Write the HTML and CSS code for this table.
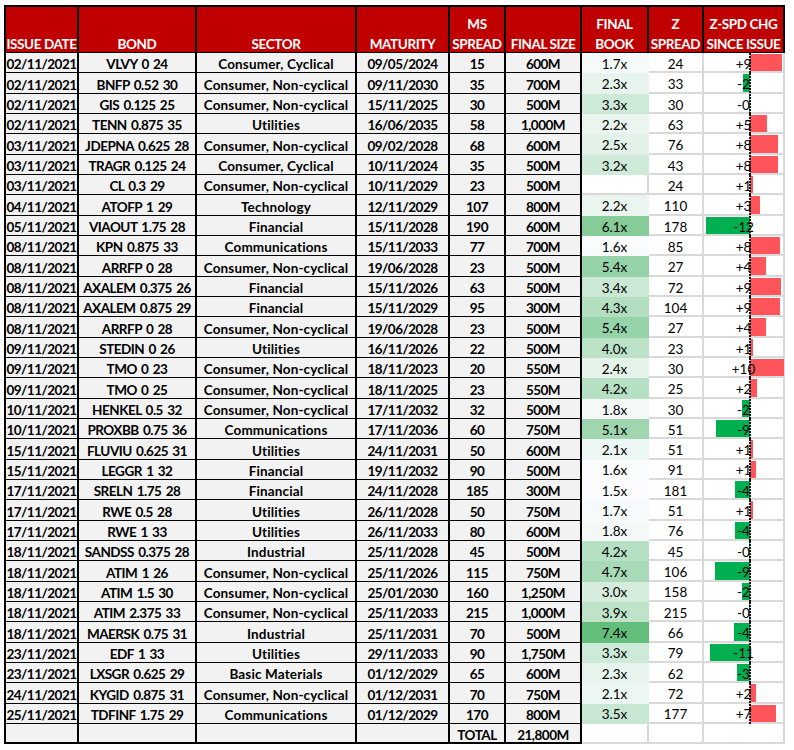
FILE: index.html
```html
<!DOCTYPE html>
<html lang="en">
<head>
<meta charset="utf-8">
<title>New issue performance</title>
<link rel="stylesheet" href="styles.css">
</head>
<body>
<div class="sheet">
  <div class="h first"><span>ISSUE DATE</span></div>
  <div class="h"><span>BOND</span></div>
  <div class="h"><span>SECTOR</span></div>
  <div class="h"><span>MATURITY</span></div>
  <div class="h"><span>MS<br>SPREAD</span></div>
  <div class="h"><span>FINAL SIZE</span></div>
  <div class="h"><span>FINAL<br>BOOK</span></div>
  <div class="h"><span>Z<br>SPREAD</span></div>
  <div class="h"><span>Z-SPD CHG<br>SINCE ISSUE</span></div>

  <div class="c first">02/11/2021</div><div class="c">VLVY 0 24</div><div class="c">Consumer, Cyclical</div><div class="c">09/05/2024</div><div class="c">15</div><div class="c">600M</div><div class="b" style="--fill:#f7fafb">1.7x</div><div class="zs">24</div><div class="z"><i class="bar pos" style="width:32px"></i><span>+9</span></div>
  <div class="c first">02/11/2021</div><div class="c">BNFP 0.52 30</div><div class="c">Consumer, Non-cyclical</div><div class="c">09/11/2030</div><div class="c">35</div><div class="c">700M</div><div class="b" style="--fill:#e7f4ed">2.3x</div><div class="zs">33</div><div class="z"><i class="bar neg" style="width:7px"></i><span>-2</span></div>
  <div class="c first">02/11/2021</div><div class="c">GIS 0.125 25</div><div class="c">Consumer, Non-cyclical</div><div class="c">15/11/2025</div><div class="c">30</div><div class="c">500M</div><div class="b" style="--fill:#cde9d7">3.3x</div><div class="zs">30</div><div class="z"><i class="bar neg" style="width:1px"></i><span>-0</span></div>
  <div class="c first">02/11/2021</div><div class="c">TENN 0.875 35</div><div class="c">Utilities</div><div class="c">16/06/2035</div><div class="c">58</div><div class="c">1,000M</div><div class="b" style="--fill:#eaf5ef">2.2x</div><div class="zs">63</div><div class="z"><i class="bar pos" style="width:17px"></i><span>+5</span></div>
  <div class="c first">03/11/2021</div><div class="c">JDEPNA 0.625 28</div><div class="c">Consumer, Non-cyclical</div><div class="c">09/02/2028</div><div class="c">68</div><div class="c">600M</div><div class="b" style="--fill:#e2f2e9">2.5x</div><div class="zs">76</div><div class="z"><i class="bar pos" style="width:28px"></i><span>+8</span></div>
  <div class="c first">03/11/2021</div><div class="c">TRAGR 0.125 24</div><div class="c">Consumer, Cyclical</div><div class="c">10/11/2024</div><div class="c">35</div><div class="c">500M</div><div class="b" style="--fill:#d0ead9">3.2x</div><div class="zs">43</div><div class="z"><i class="bar pos" style="width:28px"></i><span>+8</span></div>
  <div class="c first">03/11/2021</div><div class="c">CL 0.3 29</div><div class="c">Consumer, Non-cyclical</div><div class="c">10/11/2029</div><div class="c">23</div><div class="c">500M</div><div class="b empty"></div><div class="zs">24</div><div class="z"><i class="bar pos" style="width:3px"></i><span>+1</span></div>
  <div class="c first">04/11/2021</div><div class="c">ATOFP 1 29</div><div class="c">Technology</div><div class="c">12/11/2029</div><div class="c">107</div><div class="c">800M</div><div class="b" style="--fill:#eaf5ef">2.2x</div><div class="zs">110</div><div class="z"><i class="bar pos" style="width:10px"></i><span>+3</span></div>
  <div class="c first">05/11/2021</div><div class="c">VIAOUT 1.75 28</div><div class="c">Financial</div><div class="c">15/11/2028</div><div class="c">190</div><div class="c">600M</div><div class="b" style="--fill:#85cc98">6.1x</div><div class="zs">178</div><div class="z"><i class="bar neg" style="width:44px"></i><span>-12</span></div>
  <div class="c first">08/11/2021</div><div class="c">KPN 0.875 33</div><div class="c">Communications</div><div class="c">15/11/2033</div><div class="c">77</div><div class="c">700M</div><div class="b" style="--fill:#f9fbfd">1.6x</div><div class="zs">85</div><div class="z"><i class="bar pos" style="width:30px"></i><span>+8</span></div>
  <div class="c first">08/11/2021</div><div class="c">ARRFP 0 28</div><div class="c">Consumer, Non-cyclical</div><div class="c">19/06/2028</div><div class="c">23</div><div class="c">500M</div><div class="b" style="--fill:#97d3a8">5.4x</div><div class="zs">27</div><div class="z"><i class="bar pos" style="width:16px"></i><span>+4</span></div>
  <div class="c first">08/11/2021</div><div class="c">AXALEM 0.375 26</div><div class="c">Financial</div><div class="c">15/11/2026</div><div class="c">63</div><div class="c">500M</div><div class="b" style="--fill:#cbe8d5">3.4x</div><div class="zs">72</div><div class="z"><i class="bar pos" style="width:31px"></i><span>+9</span></div>
  <div class="c first">08/11/2021</div><div class="c">AXALEM 0.875 29</div><div class="c">Financial</div><div class="c">15/11/2029</div><div class="c">95</div><div class="c">300M</div><div class="b" style="--fill:#b3dfc0">4.3x</div><div class="zs">104</div><div class="z"><i class="bar pos" style="width:30px"></i><span>+9</span></div>
  <div class="c first">08/11/2021</div><div class="c">ARRFP 0 28</div><div class="c">Consumer, Non-cyclical</div><div class="c">19/06/2028</div><div class="c">23</div><div class="c">500M</div><div class="b" style="--fill:#97d3a8">5.4x</div><div class="zs">27</div><div class="z"><i class="bar pos" style="width:16px"></i><span>+4</span></div>
  <div class="c first">09/11/2021</div><div class="c">STEDIN 0 26</div><div class="c">Utilities</div><div class="c">16/11/2026</div><div class="c">22</div><div class="c">500M</div><div class="b" style="--fill:#bbe2c7">4.0x</div><div class="zs">23</div><div class="z"><i class="bar pos" style="width:3px"></i><span>+1</span></div>
  <div class="c first">09/11/2021</div><div class="c">TMO 0 23</div><div class="c">Consumer, Non-cyclical</div><div class="c">18/11/2023</div><div class="c">20</div><div class="c">550M</div><div class="b" style="--fill:#e5f3eb">2.4x</div><div class="zs">30</div><div class="z"><i class="bar pos" style="width:34px"></i><span>+10</span></div>
  <div class="c first">09/11/2021</div><div class="c">TMO 0 25</div><div class="c">Consumer, Non-cyclical</div><div class="c">18/11/2025</div><div class="c">23</div><div class="c">550M</div><div class="b" style="--fill:#b6e0c3">4.2x</div><div class="zs">25</div><div class="z"><i class="bar pos" style="width:7px"></i><span>+2</span></div>
  <div class="c first">10/11/2021</div><div class="c">HENKEL 0.5 32</div><div class="c">Consumer, Non-cyclical</div><div class="c">17/11/2032</div><div class="c">32</div><div class="c">500M</div><div class="b" style="--fill:#f4f9f8">1.8x</div><div class="zs">30</div><div class="z"><i class="bar neg" style="width:8px"></i><span>-2</span></div>
  <div class="c first">10/11/2021</div><div class="c">PROXBB 0.75 36</div><div class="c">Communications</div><div class="c">17/11/2036</div><div class="c">60</div><div class="c">750M</div><div class="b" style="--fill:#9fd6af">5.1x</div><div class="zs">51</div><div class="z"><i class="bar neg" style="width:34px"></i><span>-9</span></div>
  <div class="c first">15/11/2021</div><div class="c">FLUVIU 0.625 31</div><div class="c">Utilities</div><div class="c">24/11/2031</div><div class="c">50</div><div class="c">600M</div><div class="b" style="--fill:#ecf6f2">2.1x</div><div class="zs">51</div><div class="z"><i class="bar pos" style="width:3px"></i><span>+1</span></div>
  <div class="c first">15/11/2021</div><div class="c">LEGGR 1 32</div><div class="c">Financial</div><div class="c">19/11/2032</div><div class="c">90</div><div class="c">500M</div><div class="b" style="--fill:#f9fbfd">1.6x</div><div class="zs">91</div><div class="z"><i class="bar pos" style="width:6px"></i><span>+1</span></div>
  <div class="c first">17/11/2021</div><div class="c">SRELN 1.75 28</div><div class="c">Financial</div><div class="c">24/11/2028</div><div class="c">185</div><div class="c">300M</div><div class="b" style="--fill:#fcfcff">1.5x</div><div class="zs">181</div><div class="z"><i class="bar neg" style="width:15px"></i><span>-4</span></div>
  <div class="c first">17/11/2021</div><div class="c">RWE 0.5 28</div><div class="c">Utilities</div><div class="c">26/11/2028</div><div class="c">50</div><div class="c">750M</div><div class="b" style="--fill:#f7fafb">1.7x</div><div class="zs">51</div><div class="z"><i class="bar pos" style="width:3px"></i><span>+1</span></div>
  <div class="c first">17/11/2021</div><div class="c">RWE 1 33</div><div class="c">Utilities</div><div class="c">26/11/2033</div><div class="c">80</div><div class="c">600M</div><div class="b" style="--fill:#f4f9f8">1.8x</div><div class="zs">76</div><div class="z"><i class="bar neg" style="width:15px"></i><span>-4</span></div>
  <div class="c first">18/11/2021</div><div class="c">SANDSS 0.375 28</div><div class="c">Industrial</div><div class="c">25/11/2028</div><div class="c">45</div><div class="c">500M</div><div class="b" style="--fill:#b6e0c3">4.2x</div><div class="zs">45</div><div class="z"><i class="bar neg" style="width:1px"></i><span>-0</span></div>
  <div class="c first">18/11/2021</div><div class="c">ATIM 1 26</div><div class="c">Consumer, Non-cyclical</div><div class="c">25/11/2026</div><div class="c">115</div><div class="c">750M</div><div class="b" style="--fill:#a9dab7">4.7x</div><div class="zs">106</div><div class="z"><i class="bar neg" style="width:35px"></i><span>-9</span></div>
  <div class="c first">18/11/2021</div><div class="c">ATIM 1.5 30</div><div class="c">Consumer, Non-cyclical</div><div class="c">25/01/2030</div><div class="c">160</div><div class="c">1,250M</div><div class="b" style="--fill:#d5ecdd">3.0x</div><div class="zs">158</div><div class="z"><i class="bar neg" style="width:8px"></i><span>-2</span></div>
  <div class="c first">18/11/2021</div><div class="c">ATIM 2.375 33</div><div class="c">Consumer, Non-cyclical</div><div class="c">25/11/2033</div><div class="c">215</div><div class="c">1,000M</div><div class="b" style="--fill:#bee3c9">3.9x</div><div class="zs">215</div><div class="z"><i class="bar neg" style="width:1px"></i><span>-0</span></div>
  <div class="c first">18/11/2021</div><div class="c">MAERSK 0.75 31</div><div class="c">Industrial</div><div class="c">25/11/2031</div><div class="c">70</div><div class="c">500M</div><div class="b" style="--fill:#63be7b">7.4x</div><div class="zs">66</div><div class="z"><i class="bar neg" style="width:16px"></i><span>-4</span></div>
  <div class="c first">23/11/2021</div><div class="c">EDF 1 33</div><div class="c">Utilities</div><div class="c">29/11/2033</div><div class="c">90</div><div class="c">1,750M</div><div class="b" style="--fill:#cde9d7">3.3x</div><div class="zs">79</div><div class="z"><i class="bar neg" style="width:40px"></i><span>-11</span></div>
  <div class="c first">23/11/2021</div><div class="c">LXSGR 0.625 29</div><div class="c">Basic Materials</div><div class="c">01/12/2029</div><div class="c">65</div><div class="c">600M</div><div class="b" style="--fill:#e7f4ed">2.3x</div><div class="zs">62</div><div class="z"><i class="bar neg" style="width:13px"></i><span>-3</span></div>
  <div class="c first">24/11/2021</div><div class="c">KYGID 0.875 31</div><div class="c">Consumer, Non-cyclical</div><div class="c">01/12/2031</div><div class="c">70</div><div class="c">750M</div><div class="b" style="--fill:#ecf6f2">2.1x</div><div class="zs">72</div><div class="z"><i class="bar pos" style="width:6px"></i><span>+2</span></div>
  <div class="c first">25/11/2021</div><div class="c">TDFINF 1.75 29</div><div class="c">Communications</div><div class="c">01/12/2029</div><div class="c">170</div><div class="c">800M</div><div class="b" style="--fill:#c8e7d2">3.5x</div><div class="zs">177</div><div class="z"><i class="bar pos" style="width:26px"></i><span>+7</span></div>

  <div class="c first last"></div><div class="c last"></div><div class="c last"></div><div class="c last"></div><div class="c last">TOTAL</div><div class="c last">21,800M</div><div class="b empty"></div><div class="zs"></div><div class="zs"></div>
</div>
</body>
</html>
```

FILE: styles.css
```css
* { box-sizing: border-box; }

body {
  margin: 0;
  background: #ffffff;
  font-family: Lato, "Liberation Sans", sans-serif;
  color: #000000;
}

.sheet {
  display: grid;
  grid-template-columns: 75px 118px 160px 93px 56px 76px 67px 55px 81px;
  grid-template-rows: 48px repeat(34, 20.34px);
  width: max-content;
  margin: 5px 0 0 4px;
  font-size: 13.5px;
}

.h {
  display: flex;
  flex-direction: column;
  justify-content: flex-end;
  align-items: center;
  text-align: center;
  background: #c00000;
  color: #ffffff;
  font-weight: 700;
  line-height: 20px;
  letter-spacing: -0.4px;
  white-space: nowrap;
  border-top: 2px solid #000;
  border-right: 2px solid #000;
  border-bottom: 1px solid #000;
}

.h span { margin-bottom: -2px; }

.c, .b, .zs, .z {
  display: flex;
  align-items: center;
  justify-content: center;
  white-space: nowrap;
  line-height: 1;
  padding-top: 5px;
}

.c {
  background: #f2f2f2;
  font-weight: 700;
  border-right: 2px solid #000;
  border-bottom: 1px solid #000;
}

.c:nth-child(9n+1),
.c:nth-child(9n+2),
.c:nth-child(9n+4),
.c:nth-child(9n+5),
.c:nth-child(9n+6) {
  letter-spacing: -0.5px;
}

.c:nth-child(9n+2) { word-spacing: 1.5px; }

.c:nth-child(9n+3) { letter-spacing: 0.15px; }

.first { border-left: 2px solid #000; }

.c.last { border-bottom: 2px solid #000; }

.b {
  --fill: #ffffff;
  background: var(--fill);
  border-right: 2px solid var(--fill);
  border-bottom: 2px solid var(--fill);
}

.b.empty {
  border-right-color: #d9d9d9;
  border-bottom-color: #d9d9d9;
}

.zs, .z {
  background: #ffffff;
  border-right: 2px solid #d9d9d9;
  border-bottom: 2px solid #d9d9d9;
}

.z { position: relative; }

.z span {
  position: relative;
  z-index: 2;
}

.z::after {
  content: "";
  position: absolute;
  left: 45px;
  top: 0;
  bottom: -2px;
  width: 2px;
  z-index: 3;
  background: repeating-linear-gradient(to bottom, #111 0 2px, transparent 2px 3px);
}

.bar {
  position: absolute;
  top: 1px;
  bottom: 0;
  z-index: 1;
}

.bar.pos {
  left: 46px;
  background: #ff555a;
}

.bar.neg {
  right: 33px;
  background: #00b050;
}
```
